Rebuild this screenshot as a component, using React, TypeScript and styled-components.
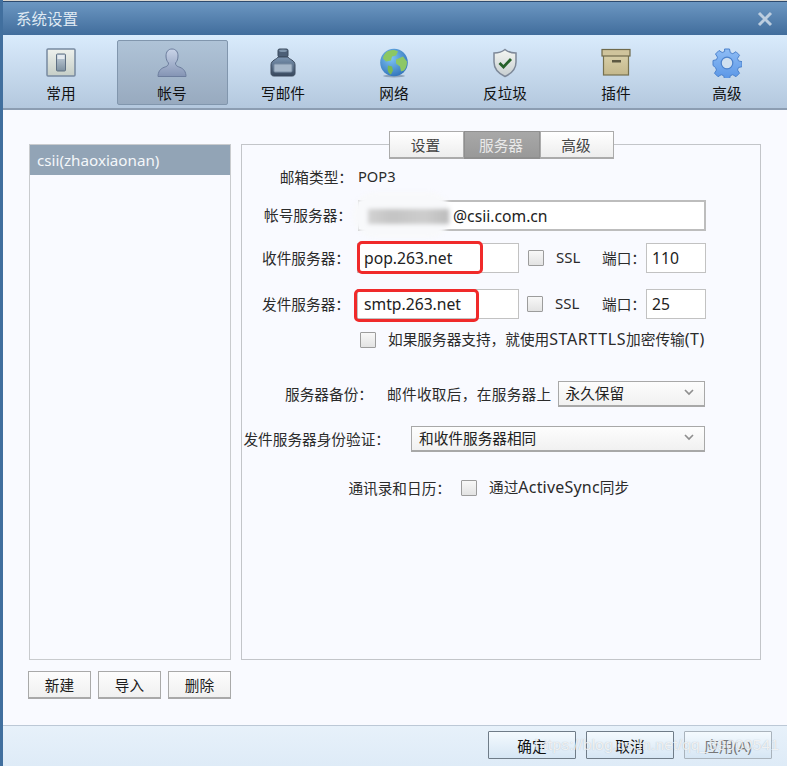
import React from 'react';
import styled, { createGlobalStyle } from 'styled-components';

const GlobalStyle = createGlobalStyle`
  html, body {
    margin: 0;
    padding: 0;
    background: #416f9e;
  }
  * {
    box-sizing: border-box;
  }
`;

const Window = styled.div`
  width: 787px;
  height: 766px;
  overflow: hidden;
  display: flex;
  flex-direction: column;
  background: #f9faff;
  color: #1c1c1c;
  font-family: 'Noto Sans', 'Noto Sans CJK SC', sans-serif;
  font-size: 14.67px;
  border-left: 3px solid #416f9e;
`;

const ScreenEdge = styled.div`
  height: 2px;
  margin-left: -3px;
  flex: none;
  background: #d9d6d0;
  border-bottom: 1px solid #2d4a6e;
`;

const TitleBar = styled.div`
  height: 33px;
  margin-left: -3px;
  padding: 0 14px 0 16px;
  flex: none;
  display: flex;
  align-items: center;
  justify-content: space-between;
  background: linear-gradient(#6c97c2, #416d9c);
  color: #dfe9f3;
  font-size: 15.5px;
`;

const Toolbar = styled.div`
  height: 75px;
  padding: 5px 0 0 3px;
  flex: none;
  display: flex;
  background: linear-gradient(#d9ebfc, #b4c8de);
  border-bottom: 2px solid #8c9db2;
`;

const ToolItem = styled.div<{ $active?: boolean }>`
  width: 111px;
  height: 65px;
  padding: 7px 1px 0 0;
  display: flex;
  flex-direction: column;
  align-items: center;
  gap: 4px;
  color: #111;
  border-radius: 2px;
  border: 1px solid ${(p) => (p.$active ? '#8196ad' : 'transparent')};
  background: ${(p) =>
    p.$active ? 'linear-gradient(#afc3d7, #98aabf)' : 'transparent'};
`;

const ToolIcon = styled.svg`
  width: 30px;
  height: 30px;
  display: block;
  flex: none;
`;

const Body = styled.div`
  flex: 1;
  padding: 21px 26px 0;
  display: flex;
  gap: 10px;
`;

const LeftColumn = styled.div`
  width: 202px;
  display: flex;
  flex-direction: column;
  padding-top: 13px;
`;

const AccountList = styled.div`
  height: 516px;
  border: 1px solid #c9cbce;
`;

const AccountRow = styled.div`
  height: 30px;
  padding-left: 7px;
  display: flex;
  align-items: center;
  background: #92a4b6;
  color: #f4f7fa;
  font-size: 15.2px;
`;

const ListActions = styled.div`
  margin: 11px 0 0 -1px;
  display: flex;
  gap: 7px;
`;

const PlainButton = styled.div`
  width: 63px;
  height: 28px;
  display: flex;
  align-items: center;
  justify-content: center;
  border: 1px solid #a9a9a9;
  border-bottom-width: 2px;
  background: linear-gradient(#fdfdfd, #f0f0f0);
`;

const RightColumn = styled.div`
  width: 520px;
  display: flex;
  flex-direction: column;
`;

const Tabs = styled.div`
  position: relative;
  z-index: 1;
  height: 28px;
  margin-left: 148px;
  display: flex;
`;

const Tab = styled.div<{ $active?: boolean; $width: number }>`
  width: ${(p) => p.$width}px;
  padding-right: 2px;
  display: flex;
  align-items: center;
  justify-content: center;
  border: 1px solid ${(p) => (p.$active ? '#8f8f8f' : '#ababab')};
  border-bottom-width: 2px;
  color: ${(p) => (p.$active ? '#e9e9e9' : '#444')};
  background: ${(p) =>
    p.$active ? 'linear-gradient(#a8a8a8, #999)' : 'linear-gradient(#fff, #ededed)'};
`;

const Panel = styled.div`
  height: 516px;
  margin-top: -15px;
  padding-top: 19px;
  display: flex;
  flex-direction: column;
  border: 1px solid #c3c5c9;
`;

const Row = styled.div<{ $top: number; $height: number }>`
  height: ${(p) => p.$height}px;
  margin-top: ${(p) => p.$top}px;
  display: flex;
  align-items: center;
  flex: none;
`;

const Label = styled.div<{ $width: number; $gap?: number }>`
  width: ${(p) => p.$width}px;
  margin-right: ${(p) => p.$gap ?? 7}px;
  padding-bottom: 2px;
  flex: none;
  text-align: right;
  white-space: nowrap;
  color: #2b2b2b;
`;

const Field = styled.div<{ $width: number; $strong?: boolean; $pad?: number }>`
  position: relative;
  width: ${(p) => p.$width}px;
  height: 100%;
  padding-left: ${(p) => p.$pad ?? 6}px;
  display: flex;
  align-items: center;
  flex: none;
  background: #fff;
  border: 1px solid;
  border-width: ${(p) => (p.$strong ? '2px 2px 2px 1px' : '1px')};
  border-color: ${(p) => (p.$strong ? '#bdbdbd' : '#c2c2c2')};
  color: #222;
  font-size: 15.7px;
`;

const Highlight = styled.div<{ $left: number; $top: number; $width: number; $height: number }>`
  position: absolute;
  left: ${(p) => p.$left}px;
  top: ${(p) => p.$top}px;
  width: ${(p) => p.$width}px;
  height: ${(p) => p.$height}px;
  border: 3px solid #f02a2a;
  border-radius: 5px;
`;

const Redaction = styled.div`
  position: absolute;
  left: -6px;
  top: -10px;
  width: 98px;
  height: 46px;
  background: #f8f9fb;
  border-radius: 22px;
  filter: blur(2px);

  &::after {
    content: '';
    position: absolute;
    left: 15px;
    right: 2px;
    top: 17px;
    height: 15px;
    background: linear-gradient(90deg, #d2d2d2, #c4c4c4 30%, #cdcdcd 70%, #bcbcbc);
  }
`;

const Check = styled.div<{ $left: number; $right: number }>`
  width: 16px;
  height: 16px;
  margin-left: ${(p) => p.$left}px;
  margin-right: ${(p) => p.$right}px;
  flex: none;
  border: 1px solid #9c9c9c;
  border-radius: 1px;
  background: linear-gradient(#f8f8f8, #e3e3e3);
`;

const Text = styled.span<{ $width?: number; $spacing?: number }>`
  width: ${(p) => (p.$width ? `${p.$width}px` : 'auto')};
  padding-bottom: 2px;
  flex: none;
  white-space: nowrap;
  letter-spacing: ${(p) => p.$spacing ?? 0}px;
  color: #2b2b2b;
`;

const Latin = styled.span<{ $spacing?: number }>`
  font-size: 16px;
  letter-spacing: ${(p) => p.$spacing ?? 0.6}px;
`;

const SslText = styled(Text)`
  font-size: 15px;
`;

const Select = styled.div<{ $width: number; $left?: number }>`
  width: ${(p) => p.$width}px;
  height: 100%;
  margin-left: ${(p) => p.$left ?? 0}px;
  padding: 0 10px 2px 7px;
  flex: none;
  display: flex;
  align-items: center;
  justify-content: space-between;
  border: 1px solid #a8a8a8;
  border-bottom-width: 2px;
  background: linear-gradient(#fdfdfd, #f1f1f1);
  color: #222;
`;

const Footer = styled.div`
  position: relative;
  height: 41px;
  padding: 5px 15px 0 0;
  flex: none;
  display: flex;
  justify-content: flex-end;
  gap: 10px;
  border-top: 1px solid #bcc8d6;
  background: linear-gradient(#e7f1fa, #deebf7);
`;

const FooterButton = styled.div<{ $disabled?: boolean }>`
  width: 88px;
  height: 28px;
  display: flex;
  align-items: center;
  justify-content: center;
  border: 1px solid ${(p) => (p.$disabled ? '#a9b3bc' : '#6f7c88')};
  border-radius: 1px;
  color: ${(p) => (p.$disabled ? '#777' : '#111')};
  background: linear-gradient(#f4fafe, #d6e6f4);
`;

const Watermark = styled.div`
  position: absolute;
  right: 8px;
  top: 10px;
  color: rgba(255, 255, 255, 0.78);
  font-family: 'Liberation Sans', sans-serif;
  font-size: 15.5px;
  letter-spacing: 0.2px;
  text-shadow: 0 0 1px rgba(90, 100, 110, 0.4);
  pointer-events: none;
`;

const CloseIcon = () => (
  <svg width="16" height="16" viewBox="0 0 16 16">
    <path d="M2 2 14 14M14 2 2 14" stroke="#bccddf" strokeWidth="3" />
  </svg>
);

const Chevron = () => (
  <svg width="10" height="7" viewBox="0 0 10 7">
    <path d="M1 1 5 5 9 1" fill="none" stroke="#8f8f8f" strokeWidth="1.7" />
  </svg>
);

const SwitchIcon = () => (
  <ToolIcon viewBox="0 0 30 30">
    <defs>
      <linearGradient id="sw" x1="0" y1="0" x2="0" y2="1">
        <stop offset="0" stopColor="#eef1ed" />
        <stop offset="1" stopColor="#c5cec7" />
      </linearGradient>
      <linearGradient id="swk" x1="0" y1="0" x2="0" y2="1">
        <stop offset="0" stopColor="#c7d3de" />
        <stop offset="1" stopColor="#7d909f" />
      </linearGradient>
    </defs>
    <rect x="1" y="1" width="28" height="27" rx="1" fill="url(#sw)" stroke="#7789a0" strokeWidth="1.5" />
    <rect x="10.500" y="6" width="9" height="17" rx="1" fill="url(#swk)" stroke="#5f7083" />
    <rect x="11.500" y="7" width="7" height="4" fill="#e4eaef" />
  </ToolIcon>
);

const PersonIcon = () => (
  <ToolIcon viewBox="0 0 30 30">
    <defs>
      <linearGradient id="pr" x1="0" y1="0" x2="0" y2="1">
        <stop offset="0" stopColor="#c9d4e8" />
        <stop offset="0.55" stopColor="#a3b1cc" />
        <stop offset="1" stopColor="#8494b4" />
      </linearGradient>
    </defs>
    <path
      d="M15 1c4 0 6 3 6 7 0 3-1 5.500-2.500 7 0 2 .8 3 3 3.800 4 1.400 6.800 3 7.500 8.700v1H1v-1c.7-5.700 3.500-7.300 7.500-8.700 2.200-.8 3-1.800 3-3.800C10 13.500 9 11 9 8c0-4 2-7 6-7Z"
      fill="url(#pr)"
      stroke="#6c7d9d"
    />
  </ToolIcon>
);

const InkIcon = () => (
  <ToolIcon viewBox="0 0 30 30">
    <defs>
      <linearGradient id="ik" x1="0" y1="0" x2="0" y2="1">
        <stop offset="0" stopColor="#7d97b4" />
        <stop offset="1" stopColor="#37475c" />
      </linearGradient>
    </defs>
    <rect x="10" y="1" width="10" height="8" rx="1.500" fill="#4c5f77" stroke="#3a4a5d" />
    <ellipse cx="15" cy="2.800" rx="4" ry="1.300" fill="#7f95ac" />
    <path d="M10 9h10c1 2.500 7 3 7 8v8c0 2-1 3-3 3H6c-2 0-3-1-3-3v-8c0-5 6-5.500 7-8Z" fill="url(#ik)" stroke="#3c4b5e" />
    <rect x="6" y="16" width="18" height="8" rx="1" fill="#a6b7c9" stroke="#7b8ea4" />
  </ToolIcon>
);

const GlobeIcon = () => (
  <ToolIcon viewBox="0 0 30 30">
    <defs>
      <radialGradient id="gl" cx="0.4" cy="0.35" r="0.75">
        <stop offset="0" stopColor="#7fc4f5" />
        <stop offset="1" stopColor="#2a6db5" />
      </radialGradient>
    </defs>
    <ellipse cx="15" cy="28" rx="11" ry="1.500" fill="#8ea3ba" />
    <circle cx="15" cy="14.500" r="13.800" fill="url(#gl)" />
    <path d="M8 3.500c4-2 8-2 11 0l-2 4-4 1-1 4-5 1-3-3c0-3 2-5 4-7Z" fill="#8cc763" />
    <path d="M17 11.500l7-3 4 5c0 4-1 7-3 9l-3 1-1-5-4-3Z" fill="#8dc765" />
    <path d="M9 17.500l4 1 1 4-2 4c-3-1-4-5-3-9Z" fill="#79b955" />
  </ToolIcon>
);

const ShieldIcon = () => (
  <ToolIcon viewBox="0 0 30 30">
    <defs>
      <linearGradient id="sh" x1="0" y1="0" x2="0" y2="1">
        <stop offset="0" stopColor="#f4f6f2" />
        <stop offset="1" stopColor="#c7ced0" />
      </linearGradient>
    </defs>
    <path
      d="M15 1.500c3 2.500 6.500 3.500 11 3.500v9c0 7-4.500 11.500-11 14.500C8.500 25.500 4 21 4 14V5c4.500 0 8-1 11-3.500Z"
      fill="url(#sh)"
      stroke="#7d8898"
      strokeWidth="1.500"
    />
    <path d="M9.500 15 13.500 19 21 11" fill="none" stroke="#25602a" strokeWidth="2.800" />
  </ToolIcon>
);

const BoxIcon = () => (
  <ToolIcon viewBox="0 0 30 30">
    <defs>
      <linearGradient id="bx" x1="0" y1="0" x2="0" y2="1">
        <stop offset="0" stopColor="#d8cfa8" />
        <stop offset="1" stopColor="#c4b88c" />
      </linearGradient>
    </defs>
    <rect x="2.500" y="7" width="25" height="20" fill="url(#bx)" stroke="#76714f" strokeWidth="1.200" />
    <rect x="1" y="1.500" width="28" height="6.500" fill="#cfc49c" stroke="#6f6a4b" strokeWidth="1.200" />
    <rect x="11" y="12" width="9" height="2.500" fill="#5d5942" />
  </ToolIcon>
);

const GearIcon = () => (
  <ToolIcon viewBox="0 0 30 30">
    <defs>
      <linearGradient id="gr" x1="0" y1="0" x2="0" y2="1">
        <stop offset="0" stopColor="#8fbdf5" />
        <stop offset="1" stopColor="#5a96e6" />
      </linearGradient>
    </defs>
    <path
      d="M12.500 1h5l.8 3.700 2.500 1 3.200-2 3.500 3.500-2 3.200 1 2.500 3.500.8v5l-3.500.8-1 2.500 2 3.200-3.500 3.500-3.200-2-2.500 1-.8 3.300h-5l-.8-3.300-2.500-1-3.200 2-3.500-3.500 2-3.200-1-2.500L1 17.500v-5l3.500-.8 1-2.500-2-3.200L7 2.500l3.200 2 2.500-1Z"
      fill="url(#gr)"
      stroke="#4c82cc"
      strokeLinejoin="round"
    />
    <circle cx="15" cy="15" r="5.800" fill="#d0e0f0" stroke="#4c82cc" strokeWidth="1.200" />
  </ToolIcon>
);

const toolItems = [
  { name: '常用', icon: <SwitchIcon /> },
  { name: '帐号', icon: <PersonIcon />, active: true },
  { name: '写邮件', icon: <InkIcon /> },
  { name: '网络', icon: <GlobeIcon /> },
  { name: '反垃圾', icon: <ShieldIcon /> },
  { name: '插件', icon: <BoxIcon /> },
  { name: '高级', icon: <GearIcon /> },
];

export default function App() {
  return (
    <Window>
      <GlobalStyle />
      <ScreenEdge />
      <TitleBar>
        <span>系统设置</span>
        <CloseIcon />
      </TitleBar>
      <Toolbar>
        {toolItems.map((item) => (
          <ToolItem key={item.name} $active={item.active}>
            {item.icon}
            <span>{item.name}</span>
          </ToolItem>
        ))}
      </Toolbar>
      <Body>
        <LeftColumn>
          <AccountList>
            <AccountRow>csii(zhaoxiaonan)</AccountRow>
          </AccountList>
          <ListActions>
            <PlainButton>新建</PlainButton>
            <PlainButton>导入</PlainButton>
            <PlainButton>删除</PlainButton>
          </ListActions>
        </LeftColumn>
        <RightColumn>
          <Tabs>
            <Tab $width={75}>设置</Tab>
            <Tab $width={76} $active>
              服务器
            </Tab>
            <Tab $width={74}>高级</Tab>
          </Tabs>
          <Panel>
            <Row $top={0} $height={26}>
              <Label $width={111} $gap={5}>
                邮箱类型&#xFF1A;
              </Label>
              <Text>POP3</Text>
            </Row>
            <Row $top={10} $height={31}>
              <Label $width={110} $gap={6}>
                帐号服务器&#xFF1A;
              </Label>
              <Field $width={348} $strong $pad={94}>
                @csii.com.cn
                <Redaction />
              </Field>
            </Row>
            <Row $top={12} $height={30}>
              <Label $width={108}>收件服务器&#xFF1A;</Label>
              <Field $width={162}>
                pop.263.net
                <Highlight $left={-1} $top={-3} $width={126} $height={33} />
              </Field>
              <Check $left={9} $right={12} />
              <SslText $width={46}>SSL</SslText>
              <Text>端口&#xFF1A;</Text>
              <Field $width={60} $pad={5}>
                110
              </Field>
            </Row>
            <Row $top={16} $height={30}>
              <Label $width={108}>发件服务器&#xFF1A;</Label>
              <Field $width={162}>
                smtp.263.net
                <Highlight $left={-4} $top={-1} $width={125} $height={33} />
              </Field>
              <Check $left={8} $right={12} />
              <SslText $width={47}>SSL</SslText>
              <Text>端口&#xFF1A;</Text>
              <Field $width={60} $pad={5}>
                25
              </Field>
            </Row>
            <Row $top={9} $height={24}>
              <Check $left={118} $right={12} />
              <Text>
                如果服务器支持&#xFF0C;就使用<Latin>STARTTLS</Latin>加密传输<Latin>(T)</Latin>
              </Text>
            </Row>
            <Row $top={29} $height={26}>
              <Label $width={131} $gap={14}>
                服务器备份&#xFF1A;
              </Label>
              <Text $spacing={0.3}>邮件收取后&#xFF0C;在服务器上</Text>
              <Select $width={147} $left={6}>
                永久保留
                <Chevron />
              </Select>
            </Row>
            <Row $top={19} $height={26}>
              <Label $width={148} $gap={21}>
                发件服务器身份验证&#xFF1A;
              </Label>
              <Select $width={294}>
                和收件服务器相同
                <Chevron />
              </Select>
            </Row>
            <Row $top={23} $height={26}>
              <Label $width={209} $gap={10}>
                通讯录和日历&#xFF1A;
              </Label>
              <Check $left={0} $right={12} />
              <Text>
                通过<Latin $spacing={0.2}>ActiveSync</Latin>同步
              </Text>
            </Row>
          </Panel>
        </RightColumn>
      </Body>
      <Footer>
        <FooterButton>确定</FooterButton>
        <FooterButton>取消</FooterButton>
        <FooterButton $disabled>应用(A)</FooterButton>
        <Watermark>https://blog.csdn.net/qq_39000541</Watermark>
      </Footer>
    </Window>
  );
}
